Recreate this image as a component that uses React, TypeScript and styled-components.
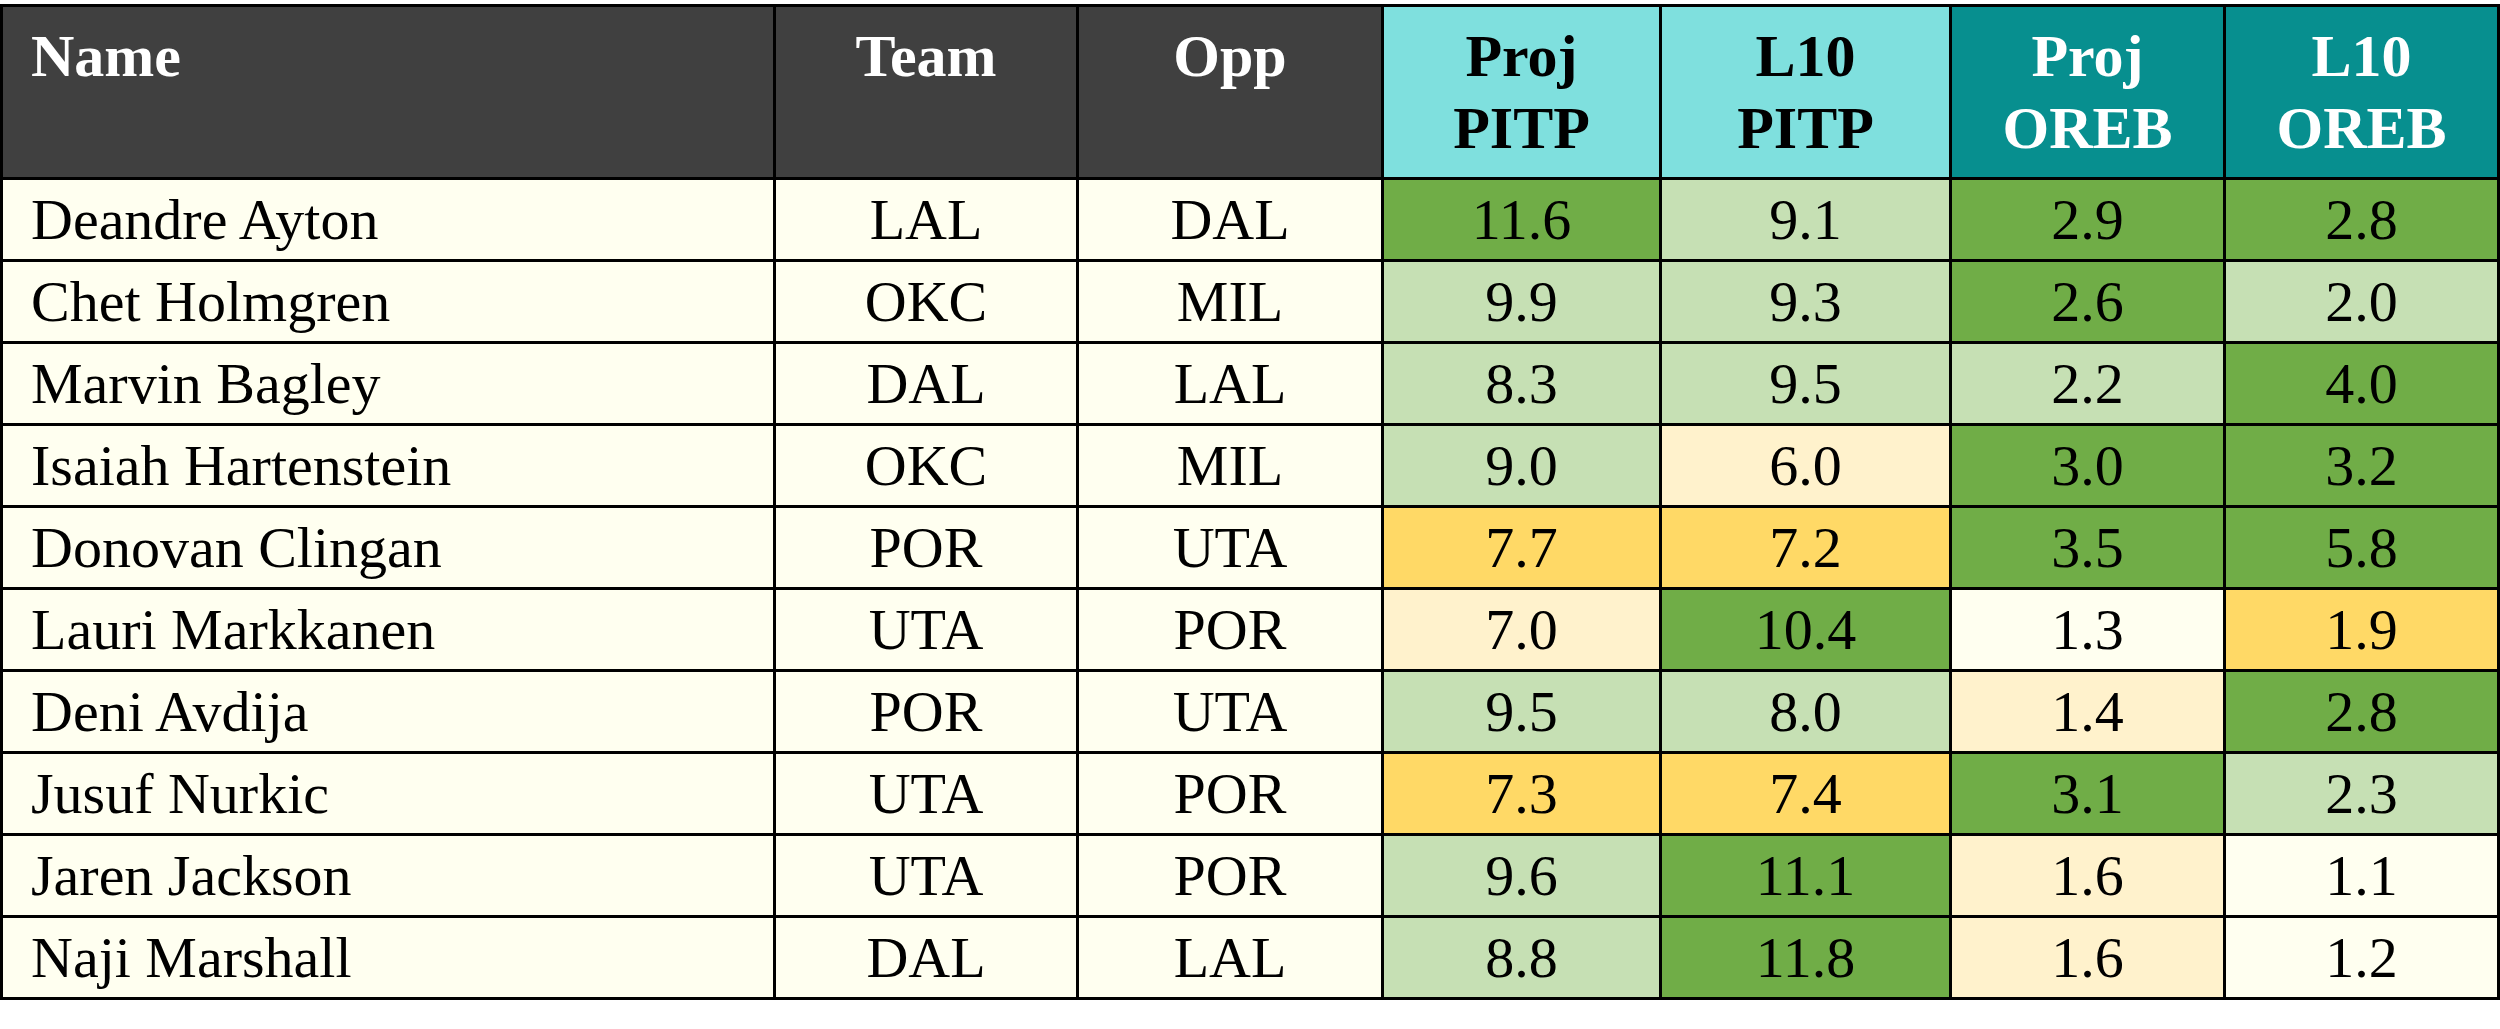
import styled, { createGlobalStyle } from "styled-components";

const GlobalStyle = createGlobalStyle`
  html, body {
    margin: 0;
    padding: 0;
    background: #ffffff;
  }
  body {
    font-family: "Liberation Serif", "Times New Roman", serif;
  }
`;

type Shade = "dark" | "light" | "cream" | "gold" | "none";

const shades: Record<Shade, string> = {
  dark: "#70ad47",
  light: "#c6e0b4",
  cream: "#fff2cc",
  gold: "#ffd966",
  none: "#fffff0",
};

type HeadTone = "slate" | "aqua" | "teal";

const headTones: Record<HeadTone, { bg: string; fg: string }> = {
  slate: { bg: "#404040", fg: "#ffffff" },
  aqua: { bg: "#7fe0de", fg: "#000000" },
  teal: { bg: "#078f8f", fg: "#ffffff" },
};

const Page = styled.div`
  padding-top: 4px;
`;

const Table = styled.table`
  border-collapse: collapse;
  table-layout: fixed;
  width: 2497px;
  border: 3px solid #000;
`;

const HeadCell = styled.th<{ $tone: HeadTone; $align?: "left" | "center" }>`
  height: 173px;
  box-sizing: border-box;
  padding: 13px 0 0 ${({ $align }) => ($align === "left" ? "28px" : "0")};
  vertical-align: top;
  text-align: ${({ $align }) => $align ?? "center"};
  background: ${({ $tone }) => headTones[$tone].bg};
  color: ${({ $tone }) => headTones[$tone].fg};
  border: 3px solid #000;
  font-size: 60px;
  line-height: 72px;
  font-weight: 700;
`;

const Row = styled.tr`
  height: 82px;
`;

const Cell = styled.td<{ $shade?: Shade; $align?: "left" | "center" }>`
  box-sizing: border-box;
  padding: 0 0 0 ${({ $align }) => ($align === "left" ? "28px" : "0")};
  vertical-align: middle;
  text-align: ${({ $align }) => $align ?? "center"};
  background: ${({ $shade }) => shades[$shade ?? "none"]};
  color: #000;
  border: 3px solid #000;
  font-size: 58px;
  line-height: 1;
  white-space: nowrap;
`;

type Stat = [string, Shade];

type Player = {
  name: string;
  team: string;
  opp: string;
  stats: [Stat, Stat, Stat, Stat];
};

const players: Player[] = [
  { name: "Deandre Ayton", team: "LAL", opp: "DAL", stats: [["11.6", "dark"], ["9.1", "light"], ["2.9", "dark"], ["2.8", "dark"]] },
  { name: "Chet Holmgren", team: "OKC", opp: "MIL", stats: [["9.9", "light"], ["9.3", "light"], ["2.6", "dark"], ["2.0", "light"]] },
  { name: "Marvin Bagley", team: "DAL", opp: "LAL", stats: [["8.3", "light"], ["9.5", "light"], ["2.2", "light"], ["4.0", "dark"]] },
  { name: "Isaiah Hartenstein", team: "OKC", opp: "MIL", stats: [["9.0", "light"], ["6.0", "cream"], ["3.0", "dark"], ["3.2", "dark"]] },
  { name: "Donovan Clingan", team: "POR", opp: "UTA", stats: [["7.7", "gold"], ["7.2", "gold"], ["3.5", "dark"], ["5.8", "dark"]] },
  { name: "Lauri Markkanen", team: "UTA", opp: "POR", stats: [["7.0", "cream"], ["10.4", "dark"], ["1.3", "none"], ["1.9", "gold"]] },
  { name: "Deni Avdija", team: "POR", opp: "UTA", stats: [["9.5", "light"], ["8.0", "light"], ["1.4", "cream"], ["2.8", "dark"]] },
  { name: "Jusuf Nurkic", team: "UTA", opp: "POR", stats: [["7.3", "gold"], ["7.4", "gold"], ["3.1", "dark"], ["2.3", "light"]] },
  { name: "Jaren Jackson", team: "UTA", opp: "POR", stats: [["9.6", "light"], ["11.1", "dark"], ["1.6", "cream"], ["1.1", "none"]] },
  { name: "Naji Marshall", team: "DAL", opp: "LAL", stats: [["8.8", "light"], ["11.8", "dark"], ["1.6", "cream"], ["1.2", "none"]] },
];

const columnWidths = [773, 303, 305, 278, 290, 274, 274];

const statHeads: { top: string; bottom: string; tone: HeadTone }[] = [
  { top: "Proj", bottom: "PITP", tone: "aqua" },
  { top: "L10", bottom: "PITP", tone: "aqua" },
  { top: "Proj", bottom: "OREB", tone: "teal" },
  { top: "L10", bottom: "OREB", tone: "teal" },
];

export default function App() {
  return (
    <Page>
      <GlobalStyle />
      <Table>
        <colgroup>
          {columnWidths.map((w, i) => (
            <col key={i} style={{ width: w }} />
          ))}
        </colgroup>
        <thead>
          <tr>
            <HeadCell $tone="slate" $align="left">Name</HeadCell>
            <HeadCell $tone="slate">Team</HeadCell>
            <HeadCell $tone="slate">Opp</HeadCell>
            {statHeads.map(h => (
              <HeadCell key={h.top + h.bottom} $tone={h.tone}>
                {h.top}
                <br />
                {h.bottom}
              </HeadCell>
            ))}
          </tr>
        </thead>
        <tbody>
          {players.map(p => (
            <Row key={p.name}>
              <Cell $align="left">{p.name}</Cell>
              <Cell>{p.team}</Cell>
              <Cell>{p.opp}</Cell>
              {p.stats.map(([value, shade], i) => (
                <Cell key={i} $shade={shade}>
                  {value}
                </Cell>
              ))}
            </Row>
          ))}
        </tbody>
      </Table>
    </Page>
  );
}
